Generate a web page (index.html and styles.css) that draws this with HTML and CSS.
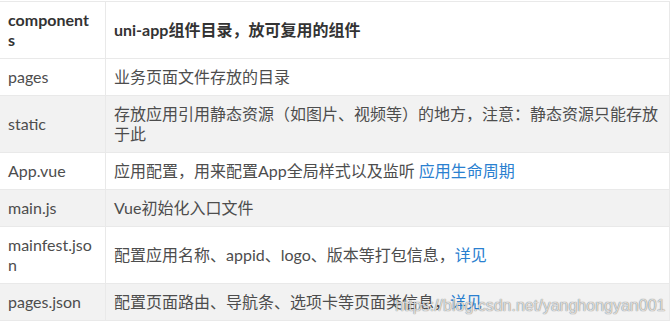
FILE: index.html
```html
<!DOCTYPE html>
<html lang="zh-CN">
<head>
<meta charset="utf-8">
<title>uni-app 目录结构</title>
<link rel="stylesheet" href="styles.css">
</head>
<body>
<div class="shot">
  <table class="dirs">
    <thead>
      <tr><th class="name">components</th><th>uni-app组件目录，放可复用的组件</th></tr>
    </thead>
    <tbody>
      <tr><td class="name">pages</td><td>业务页面文件存放的目录</td></tr>
      <tr><td class="name">static</td><td>存放应用引用静态资源（如图片、视频等）的地方，注意：静态资源只能存放于此</td></tr>
      <tr><td class="name">App.vue</td><td>应用配置，用来配置App全局样式以及监听 <a href="#">应用生命周期</a></td></tr>
      <tr><td class="name">main.js</td><td>Vue初始化入口文件</td></tr>
      <tr><td class="name">mainfest.json</td><td>配置应用名称、appid、logo、版本等打包信息，<a href="#">详见</a></td></tr>
      <tr><td class="name">pages.json</td><td>配置页面路由、导航条、选项卡等页面类信息，<a href="#">详见</a></td></tr>
    </tbody>
  </table>
  <span class="watermark">https://blog.csdn.net/yanghongyan001</span>
</div>
</body>
</html>
```
FILE: styles.css
```css
html, body {
  margin: 0;
  padding: 0;
  background: #fff;
}

.shot {
  position: relative;
  width: 670px;
  padding-top: 1px;
  overflow: hidden;
}

.dirs {
  border-collapse: collapse;
  width: 670px;
  table-layout: fixed;
  font-family: Lato, "Noto Sans CJK SC", sans-serif;
  font-size: 16px;
  line-height: 20px;
  color: #4d4d4d;
}

.dirs th,
.dirs td {
  border: 1px solid #e9e9e9;
  padding: 8px;
  text-align: left;
  vertical-align: middle;
  word-break: break-all;
}

.dirs th:first-child,
.dirs td:first-child {
  border-left: none;
}

.dirs th.name {
  width: 83px;
  padding-right: 14px;
}

.dirs th {
  font-weight: bold;
  color: #333;
  background: #fff;
}

.dirs tbody tr:nth-child(even) {
  background: #f2f2f2;
}

.dirs a {
  color: #2a80d0;
  text-decoration: none;
}

.watermark {
  position: absolute;
  left: 395px;
  top: 296px;
  font-family: "Liberation Sans", Arial, sans-serif;
  font-size: 16px;
  line-height: 20px;
  color: rgba(255, 255, 255, 0.75);
  text-shadow: 0 0 1px rgba(0, 0, 0, 0.45), 0 0 1px rgba(0, 0, 0, 0.3);
  white-space: nowrap;
}
```
